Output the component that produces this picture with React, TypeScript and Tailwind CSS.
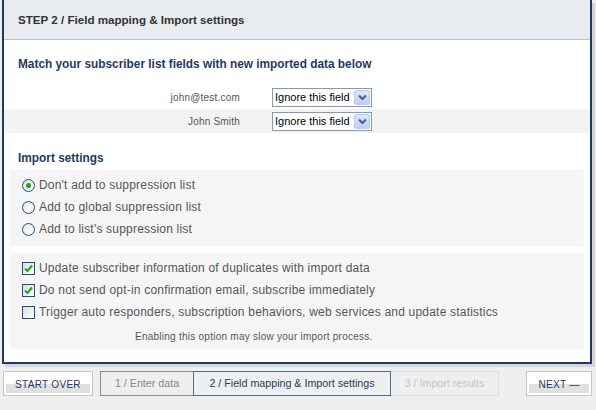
import React from "react";

const font = { fontFamily: '"Liberation Sans", Arial, sans-serif' };

function SelectBox() {
  return (
    <div className="flex h-[19px] w-[100px] items-center justify-between border border-[#7f9db9] bg-white pl-[2px] pr-[1px]">
      <span className="whitespace-nowrap text-[11px] leading-none text-black">Ignore this field</span>
      <span className="flex h-[15px] w-[16px] shrink-0 items-center justify-center rounded-[2px] border border-[#b9cbf5] bg-[linear-gradient(#dbe6fd,#bccffa)]">
        <svg width="9" height="7" viewBox="0 0 9 7">
          <path d="M1 1.5 L4.5 5 L8 1.5" fill="none" stroke="#4d6185" strokeWidth="2" />
        </svg>
      </span>
    </div>
  );
}

function Radio({ checked }: { checked?: boolean }) {
  return (
    <span className="flex h-[13px] w-[13px] shrink-0 items-center justify-center rounded-full border border-[#1c5180] bg-[radial-gradient(circle_at_65%_65%,#ffffff,#dcdcd6)]">
      {checked && <span className="h-[5px] w-[5px] rounded-full bg-[#21a121]" />}
    </span>
  );
}

function Checkbox({ checked }: { checked?: boolean }) {
  return (
    <span className="flex h-[13px] w-[13px] shrink-0 items-center justify-center border border-[#1c5180] bg-[linear-gradient(135deg,#dcdcd7,#ffffff)]">
      {checked && (
        <svg width="9" height="9" viewBox="0 0 9 9">
          <path d="M1 4.5 L3.5 7 L8 1.5" fill="none" stroke="#21a121" strokeWidth="2" />
        </svg>
      )}
    </span>
  );
}

function FieldRow({ label, shaded }: { label: string; shaded?: boolean }) {
  return (
    <div className={`flex h-[24px] items-center ${shaded ? "bg-[#f3f3f3]" : ""}`}>
      <div className="w-[236px] text-right text-[10px] tracking-[0.2px] text-[#555]">{label}</div>
      <div className="ml-[32px]">
        <SelectBox />
      </div>
    </div>
  );
}

function Option({ children, control }: { children: React.ReactNode; control: React.ReactNode }) {
  return (
    <label className="flex h-[22px] items-center gap-[4px] text-[12px] tracking-[0.2px] text-[#555]">
      {control}
      <span>{children}</span>
    </label>
  );
}

function Button({ children, className }: { children: React.ReactNode; className?: string }) {
  return (
    <button
      className={`h-[25px] border border-[#c6c6c6] bg-[linear-gradient(#ffffff_0_52%,#e0e0e0_52%_100%)] pt-[2px] text-center text-[10px] tracking-[0.3px] text-[#1f3a5f] shadow-[inset_0_0_0_2px_#fff] ${className ?? ""}`}
    >
      {children}
    </button>
  );
}

export default function App() {
  return (
    <div className="h-[410px] w-[596px] bg-[#efefef]" style={font}>
      <div className="ml-[2px] w-[590px] border-2 border-t-0 border-[#203864] bg-white shadow-[3px_3px_0_#d6d6d6]">
        <div className="flex h-[40px] items-center border-b border-[#b9c3d0] bg-[#e9ecf1] pl-[14px]">
          <h1 className="text-[11.6px] font-bold text-[#333]">STEP 2 / Field mapping &amp; Import settings</h1>
        </div>

        <h2 className="mt-[16px] pl-[14px] text-[11.85px] font-bold leading-[16px] text-[#1f3a5f]">
          Match your subscriber list fields with new imported data below
        </h2>

        <div className="mt-[13px]">
          <FieldRow label="john@test.com" />
          <FieldRow label="John Smith" shaded />
        </div>

        <h2 className="mt-[17px] pl-[14px] text-[11.85px] font-bold leading-[16px] text-[#1f3a5f]">Import settings</h2>

        <div className="mx-[6px] mt-[4px] bg-[#f5f5f5] pl-[12px] pt-[4px] pb-[6px]">
          <Option control={<Radio checked />}>Don't add to suppression list</Option>
          <Option control={<Radio />}>Add to global suppression list</Option>
          <Option control={<Radio />}>Add to list's suppression list</Option>
        </div>

        <div className="mx-[6px] mt-[7px] bg-[#f5f5f5] pl-[12px] pt-[4px] pb-[4px]">
          <Option control={<Checkbox checked />}>Update subscriber information of duplicates with import data</Option>
          <Option control={<Checkbox checked />}>Do not send opt-in confirmation email, subscribe immediately</Option>
          <Option control={<Checkbox />}>
            Trigger auto responders, subscription behaviors, web services and update statistics
          </Option>
          <p className="mt-[6px] h-[16px] pl-[113px] text-[10px] leading-[16px] tracking-[0.25px] text-[#555]">
            Enabling this option may slow your import process.
          </p>
        </div>
        <div className="h-[13px]" />
      </div>

      <div className="mt-[7px] flex items-center pl-[3px] pr-[4px]">
        <Button className="w-[90px]">START OVER</Button>
        <div className="ml-[7px] flex h-[25px] text-[10.7px]">
          <div className="flex w-[93px] items-center justify-center border border-r-0 border-[#8a8a8a] text-[#888]">
            1 / Enter data
          </div>
          <div className="flex w-[198px] items-center justify-center border border-[#4e6a8e] text-[#1f3a5f]">
            2 / Field mapping &amp; Import settings
          </div>
          <div className="flex w-[108px] items-center justify-center border border-l-0 border-[#dcdcdc] text-[#c4c4c4]">
            3 / Import results
          </div>
        </div>
        <Button className="ml-auto w-[66px]">NEXT —</Button>
      </div>
    </div>
  );
}
